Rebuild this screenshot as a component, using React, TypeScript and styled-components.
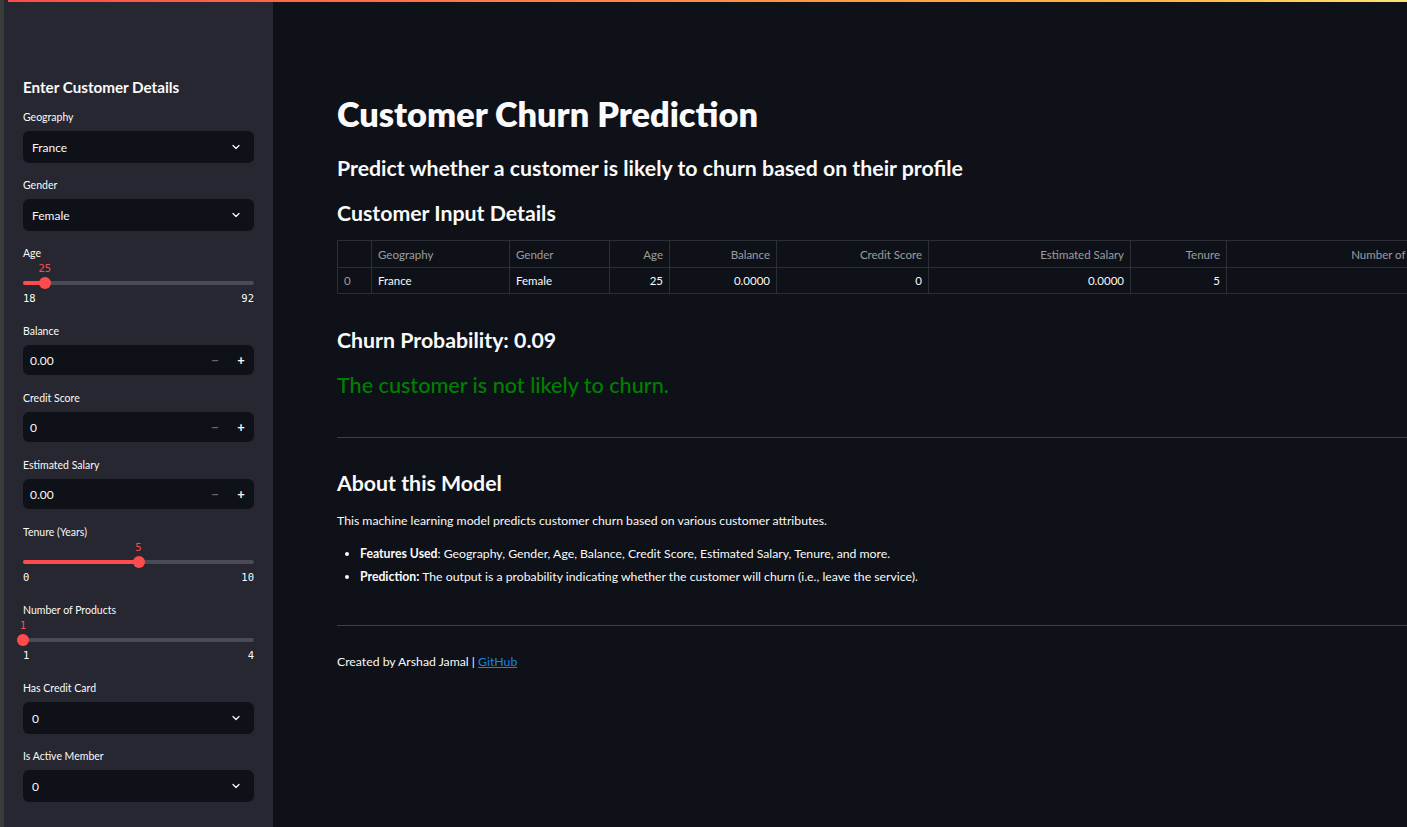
import React from "react";
import styled, { createGlobalStyle } from "styled-components";

const GlobalStyle = createGlobalStyle`
  html, body { margin: 0; padding: 0; background: #0e1117; }
  body { font-family: "Lato", "Noto Sans", sans-serif; color: #fafafa; overflow: hidden; }
  * { box-sizing: border-box; }
`;

const Page = styled.div`
  position: relative;
  display: flex;
  width: 1407px;
  height: 827px;
  overflow: hidden;
  background: #0e1117;
`;

const Decoration = styled.div`
  position: absolute;
  top: 0;
  left: 8px;
  right: 0;
  height: 2px;
  background: linear-gradient(90deg, #ff4b4b, #ffbd45 85%, #ffe27a);
  z-index: 5;
`;

const EdgeStrip = styled.div`
  width: 4px;
  flex: none;
  background: #3a3b3b;
`;

const Sidebar = styled.aside`
  width: 269px;
  flex: none;
  background: #262730;
  padding: 77px 19px 0 19px;
  display: flex;
  flex-direction: column;
`;

const SideTitle = styled.h3`
  margin: 0 0 13px 0;
  font-size: 15.2px;
  font-weight: 700;
  line-height: 20px;
  color: #fafafa;
`;

const Field = styled.div<{ $gap?: number }>`
  display: flex;
  flex-direction: column;
  margin-bottom: ${(p) => p.$gap ?? 15}px;
`;

const Label = styled.label<{ $tight?: boolean }>`
  font-size: 10.5px;
  line-height: 14px;
  color: #fafafa;
  margin-bottom: ${(p) => (p.$tight ? 0 : 7)}px;
`;

const SelectBox = styled.div`
  height: 32px;
  border-radius: 6px;
  background: #0e1117;
  display: flex;
  align-items: center;
  justify-content: space-between;
  padding: 0 12px 0 9px;
  font-size: 12px;
  color: #fafafa;
`;

const NumberBox = styled.div`
  height: 30px;
  border-radius: 6px;
  background: #0e1117;
  display: flex;
  align-items: center;
  padding: 0 0 0 7px;
  font-size: 12px;
  color: #fafafa;
`;

const NumberValue = styled.span`
  flex: 1;
`;

const StepButton = styled.span<{ $dim?: boolean }>`
  width: 26px;
  text-align: center;
  font-size: 13px;
  font-weight: 700;
  color: ${(p) => (p.$dim ? "rgba(250,250,250,0.4)" : "#fafafa")};
`;

const SliderWrap = styled.div`
  display: flex;
  flex-direction: column;
`;

const SliderTrackArea = styled.div`
  position: relative;
  height: 30px;
`;

const Track = styled.div`
  position: absolute;
  left: 0;
  right: 0;
  top: 21px;
  height: 4px;
  border-radius: 2px;
  background: #4a4b55;
`;

const TrackFill = styled.div`
  position: absolute;
  left: 0;
  top: 0;
  bottom: 0;
  border-radius: 2px;
  background: #ff4b4b;
`;

const Thumb = styled.div`
  position: absolute;
  top: 17px;
  width: 12px;
  height: 12px;
  margin-left: -6px;
  border-radius: 50%;
  background: #ff4b4b;
`;

const ThumbValue = styled.div`
  position: absolute;
  top: 2px;
  transform: translateX(-50%);
  font-family: "DejaVu Sans Mono", "Liberation Mono", monospace;
  font-size: 10.5px;
  color: #ff4b4b;
`;

const TickRow = styled.div`
  display: flex;
  justify-content: space-between;
  font-family: "DejaVu Sans Mono", "Liberation Mono", monospace;
  font-size: 10.5px;
  color: #fafafa;
  margin-top: 2px;
`;

const Main = styled.main`
  flex: 1;
  min-width: 0;
  overflow: hidden;
  padding: 92px 0 0 64px;
`;

const Content = styled.div`
  width: 1300px;
`;

const Title = styled.h1`
  margin: 0 0 18px 0;
  font-size: 34.3px;
  line-height: 44px;
  font-weight: 800;
  color: #fafafa;
`;

const Subheader = styled.h3<{ $mb?: number; $mt?: number }>`
  margin: ${(p) => p.$mt ?? 0}px 0 ${(p) => p.$mb ?? 14}px 0;
  font-size: 21.3px;
  line-height: 28px;
  font-weight: 700;
  color: #fafafa;
`;

const Table = styled.table`
  border-collapse: collapse;
  table-layout: fixed;
  width: 1272px;
  font-size: 11.5px;
  margin: 0 0 32px 0;
  & th, & td {
    border: 1px solid #2b2e36;
    padding: 0 6px;
    white-space: nowrap;
    overflow: hidden;
  }
  & th {
    height: 27px;
    font-weight: 400;
    color: rgba(250, 250, 250, 0.6);
  }
  & td {
    height: 26px;
    color: #fafafa;
  }
`;

const Cell = styled.td<{ $align?: string; $muted?: boolean }>`
  text-align: ${(p) => p.$align ?? "left"};
  && { color: ${(p) => (p.$muted ? "rgba(250,250,250,0.6)" : "#fafafa")}; }
`;

const Head = styled.th<{ $align?: string }>`
  text-align: ${(p) => p.$align ?? "left"};
`;

const Verdict = styled.h3`
  margin: 0 0 38px 0;
  font-size: 21.6px;
  line-height: 28px;
  font-weight: 500;
  color: #008000;
`;

const Rule = styled.hr`
  margin: 0;
  border: none;
  border-top: 1px solid #3d3f48;
`;

const Paragraph = styled.p`
  margin: 0 0 15px 0;
  font-size: 12.25px;
  line-height: 18px;
  color: #fafafa;
`;

const List = styled.ul`
  margin: 0 0 39px 0;
  padding: 0 0 0 23px;
  font-size: 12.25px;
  line-height: 18px;
  & li { margin-bottom: 5px; }
`;

const Footer = styled.p`
  margin: 27px 0 0 0;
  font-size: 12.25px;
  line-height: 18px;
  color: #fafafa;
`;

const Link = styled.a`
  color: #1c83e1;
  text-decoration: underline;
`;

const Chevron = () => (
  <svg width="12" height="12" viewBox="0 0 24 24" fill="none" stroke="#fafafa" strokeWidth="2.5" strokeLinecap="round" strokeLinejoin="round">
    <polyline points="6 9 12 15 18 9" />
  </svg>
);

const Select = ({ label, value }: { label: string; value: string }) => (
  <Field $gap={15}>
    <Label>{label}</Label>
    <SelectBox>
      <span>{value}</span>
      <Chevron />
    </SelectBox>
  </Field>
);

const NumberInput = ({ label, value }: { label: string; value: string }) => (
  <Field $gap={16}>
    <Label>{label}</Label>
    <NumberBox>
      <NumberValue>{value}</NumberValue>
      <StepButton $dim>−</StepButton>
      <StepButton>+</StepButton>
    </NumberBox>
  </Field>
);

const Slider = ({ label, min, max, value }: { label: string; min: number; max: number; value: number }) => {
  const pct = ((value - min) / (max - min)) * 100;
  return (
    <Field $gap={20}>
      <Label $tight>{label}</Label>
      <SliderWrap>
        <SliderTrackArea>
          <ThumbValue style={{ left: `${pct}%` }}>{value}</ThumbValue>
          <Track>
            <TrackFill style={{ width: `${pct}%` }} />
          </Track>
          <Thumb style={{ left: `${pct}%` }} />
        </SliderTrackArea>
        <TickRow>
          <span>{min}</span>
          <span>{max}</span>
        </TickRow>
      </SliderWrap>
    </Field>
  );
};

const columns = [34, 138, 100, 60, 107, 152, 202, 96, 233, 150];

export default function App() {
  return (
    <>
      <GlobalStyle />
      <Page>
        <Decoration />
        <EdgeStrip />
        <Sidebar>
          <SideTitle>Enter Customer Details</SideTitle>
          <Select label="Geography" value="France" />
          <Select label="Gender" value="Female" />
          <Slider label="Age" min={18} max={92} value={25} />
          <NumberInput label="Balance" value="0.00" />
          <NumberInput label="Credit Score" value="0" />
          <NumberInput label="Estimated Salary" value="0.00" />
          <Slider label="Tenure (Years)" min={0} max={10} value={5} />
          <Slider label="Number of Products" min={1} max={4} value={1} />
          <Select label="Has Credit Card" value="0" />
          <Select label="Is Active Member" value="0" />
        </Sidebar>
        <Main>
          <Content>
            <Title>Customer Churn Prediction</Title>
            <Subheader $mb={17}>Predict whether a customer is likely to churn based on their profile</Subheader>
            <Subheader $mb={13}>Customer Input Details</Subheader>
            <Table>
              <colgroup>
                {columns.map((w, i) => (
                  <col key={i} style={{ width: w }} />
                ))}
              </colgroup>
              <thead>
                <tr>
                  <Head></Head>
                  <Head>Geography</Head>
                  <Head>Gender</Head>
                  <Head $align="right">Age</Head>
                  <Head $align="right">Balance</Head>
                  <Head $align="right">Credit Score</Head>
                  <Head $align="right">Estimated Salary</Head>
                  <Head $align="right">Tenure</Head>
                  <Head $align="right">Number of Products</Head>
                  <Head $align="right">Has Credit Card</Head>
                </tr>
              </thead>
              <tbody>
                <tr>
                  <Cell $muted>0</Cell>
                  <Cell>France</Cell>
                  <Cell>Female</Cell>
                  <Cell $align="right">25</Cell>
                  <Cell $align="right">0.0000</Cell>
                  <Cell $align="right">0</Cell>
                  <Cell $align="right">0.0000</Cell>
                  <Cell $align="right">5</Cell>
                  <Cell $align="right">1</Cell>
                  <Cell $align="right">0</Cell>
                </tr>
              </tbody>
            </Table>
            <Subheader $mb={17}>Churn Probability: 0.09</Subheader>
            <Verdict>The customer is not likely to churn.</Verdict>
            <Rule />
            <Subheader $mt={31} $mb={15}>About this Model</Subheader>
            <Paragraph>This machine learning model predicts customer churn based on various customer attributes.</Paragraph>
            <List>
              <li><strong>Features Used</strong>: Geography, Gender, Age, Balance, Credit Score, Estimated Salary, Tenure, and more.</li>
              <li><strong>Prediction:</strong> The output is a probability indicating whether the customer will churn (i.e., leave the service).</li>
            </List>
            <Rule />
            <Footer>Created by Arshad Jamal | <Link href="#">GitHub</Link></Footer>
          </Content>
        </Main>
      </Page>
    </>
  );
}
